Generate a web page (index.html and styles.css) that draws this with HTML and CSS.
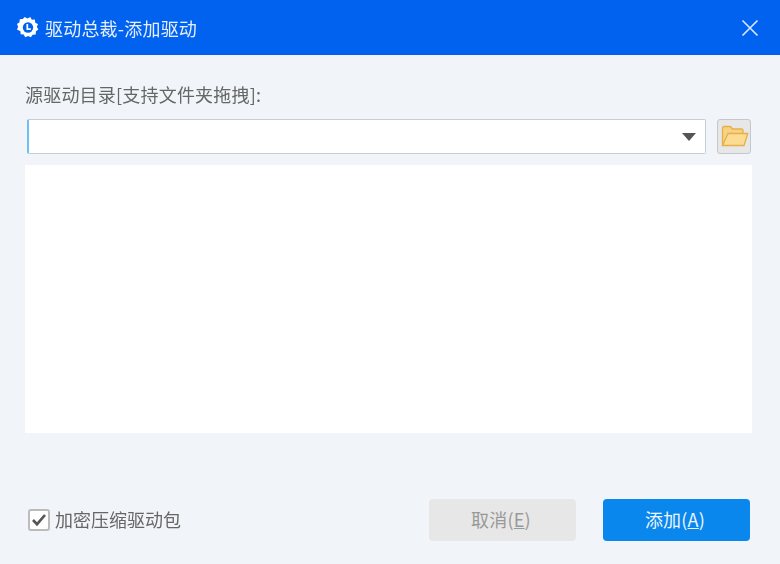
FILE: index.html
```html
<!DOCTYPE html>
<html lang="zh-CN">
<head>
<meta charset="utf-8">
<title>驱动总裁-添加驱动</title>
<link rel="stylesheet" href="styles.css">
</head>
<body>
<div class="dialog">
  <header class="titlebar">
    <div class="title-left">
      <svg class="logo" viewBox="0 0 24 24" width="23" height="23" aria-hidden="true">
        <path fill="#fff" d="M9 1l3 1.500 3-1.500 1.500 2.800 3.200-.2.300 3.200L23 8.500l-1.300 2.800 1.600 2.700-2.500 2-.2 3.200-3.200.3-1.900 2.700-2.900-1.300-3 1.200-1.500-2.800-3.200-.3-.3-3.200L1 14l1.300-2.800L1 8.400l2.700-1.800.2-3.200 3.200-.2z"/>
        <circle cx="12.500" cy="12" r="5.400" fill="#0062ee"/>
        <path fill="none" stroke="#fff" stroke-width="1.800" d="M11.800 8.300v5.400h3.700"/>
      </svg>
      <span class="title">驱动总裁-添加驱动</span>
    </div>
    <svg class="close" viewBox="0 0 18 18" width="18" height="18" aria-hidden="true">
      <path stroke="#dbe8fd" stroke-width="1.600" fill="none" d="M1.500 1.500l15 15M16.500 1.500l-15 15"/>
    </svg>
  </header>
  <main class="content">
    <label class="label">源驱动目录[支持文件夹拖拽]:</label>
    <div class="source-row">
      <div class="combo">
        <span class="arrow"></span>
      </div>
      <button class="folder-btn" type="button" aria-label="browse">
        <svg viewBox="0 0 28 22" width="28" height="22" aria-hidden="true">
          <path fill="#f7d283" stroke="#e5b04a" stroke-width="1.300" d="M1.500 20V3a1.500 1.500 0 0 1 1.500-1.500h6.500l2 2.500h9a1.500 1.500 0 0 1 1.500 1.500V8"/>
          <path fill="#fbdc92" stroke="#e5b04a" stroke-width="1.300" d="M7 8.500h19.800L23 20.500H1.500z"/>
        </svg>
      </button>
    </div>
    <div class="list"></div>
    <footer class="footer">
      <div class="check-wrap">
        <span class="check">
          <svg viewBox="0 0 16 16" width="16" height="16" aria-hidden="true">
            <path fill="none" stroke="#555" stroke-width="2.600" d="M2 8l4 4.200L14 3"/>
          </svg>
        </span>
        <span class="check-label">加密压缩驱动包</span>
      </div>
      <div class="buttons">
        <button class="btn btn-cancel" type="button">取消(<u>E</u>)</button>
        <button class="btn btn-add" type="button">添加(<u>A</u>)</button>
      </div>
    </footer>
  </main>
</div>
</body>
</html>
```

FILE: styles.css
```css
* { box-sizing: border-box; }
html, body { margin: 0; padding: 0; }
body {
  width: 780px;
  height: 564px;
  overflow: hidden;
  background: #f1f4f8;
  font-family: "Noto Sans CJK SC", "Noto Sans", sans-serif;
}
.dialog { display: flex; flex-direction: column; height: 564px; }
.titlebar {
  height: 55px;
  flex: none;
  background: #0062ee;
  display: flex;
  align-items: center;
  justify-content: space-between;
  padding: 0 21px 0 16px;
}
.title-left { display: flex; align-items: center; gap: 6px; }
.logo { display: block; }
.title { color: #e6effd; font-size: 18px; line-height: 24px; letter-spacing: 0.2px; filter: blur(0.35px); }
.close { display: block; }
.content {
  flex: 1;
  display: flex;
  flex-direction: column;
  padding: 27px 28px 23px 25px;
}
.label {
  height: 26px;
  font-size: 18px;
  line-height: 24px;
  letter-spacing: 0.2px;
  color: #666;
  filter: blur(0.35px);
}
.source-row {
  display: flex;
  align-items: center;
  gap: 11px;
  margin: 11px 0 11px 2px;
  height: 35px;
}
.combo {
  width: 679px;
  height: 35px;
  background: #fff;
  border: 1px solid #c3cfd6;
  border-left: 2px solid #6cc0f2;
  border-radius: 2px;
  display: flex;
  align-items: center;
  justify-content: flex-end;
  padding-right: 9px;
}
.arrow {
  width: 0;
  height: 0;
  border-left: 7px solid transparent;
  border-right: 7px solid transparent;
  border-top: 8px solid #555;
}
.folder-btn {
  width: 34px;
  height: 35px;
  margin-top: -1px;
  padding: 0 0 0 2px;
  background: #e7e7e7;
  border: 1px solid #c5c8ca;
  border-radius: 3px;
  display: flex;
  align-items: center;
  justify-content: center;
}
.list { height: 268px; background: #fff; }
.footer {
  margin-top: 66px;
  display: flex;
  align-items: center;
  justify-content: space-between;
  padding-left: 3px;
}
.check-wrap { display: flex; align-items: center; gap: 5px; }
.check {
  width: 22px;
  height: 22px;
  background: #fff;
  border: 2px solid #bcbcbc;
  border-radius: 3px;
  display: flex;
  align-items: center;
  justify-content: center;
}
.check-label { font-size: 18px; line-height: 20px; padding-bottom: 2px; color: #666; filter: blur(0.35px); }
.buttons { display: flex; gap: 27px; padding-right: 2px; }
.btn {
  width: 147px;
  height: 42px;
  border: 0;
  border-radius: 4px;
  font-family: inherit;
  font-size: 18px;
  letter-spacing: 0.2px;
  padding: 0 3px 2px 0;
}
.btn-cancel { background: #e7e7e7; color: #999; }
.btn-add { background: #0a87ec; color: #eef6fe; }
```
